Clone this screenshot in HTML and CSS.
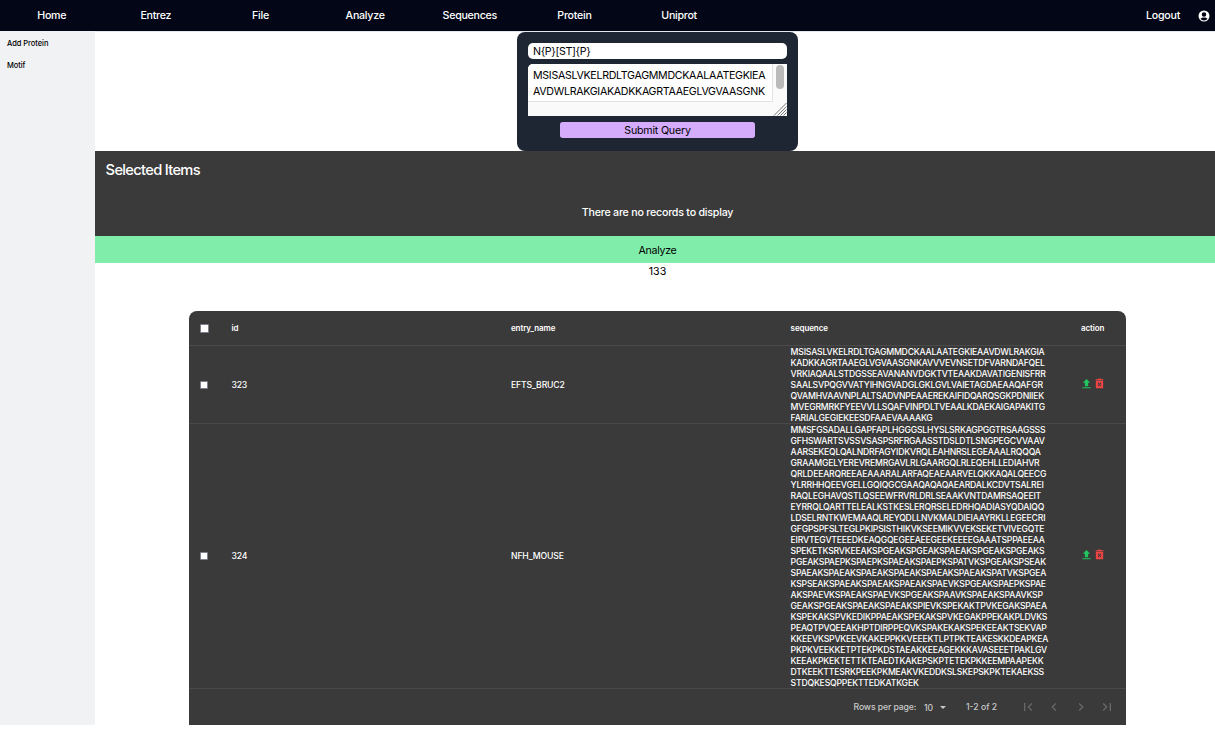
FILE: index.html
```html
<!DOCTYPE html>
<html lang="en">
<head>
<meta charset="utf-8">
<title>Motif</title>
<link rel="stylesheet" href="styles.css">
</head>
<body>
<nav class="nav">
  <a class="nav-link">Home</a><a class="nav-link">Entrez</a><a class="nav-link">File</a><a class="nav-link">Analyze</a><a class="nav-link">Sequences</a><a class="nav-link">Protein</a><a class="nav-link">Uniprot</a>
  <a class="logout">Logout</a>
  <svg class="user" viewBox="0 0 24 24"><path fill="#fff" fill-rule="evenodd" d="M12 1a11 11 0 1 0 0 22a11 11 0 0 0 0-22zM12 4.500a4.500 4.500 0 1 1 0 9a4.500 4.500 0 0 1 0-9zM5 17.500c1.500-2 4.500-2.500 7-2.500s5.500.5 7 2.500c-1.500 2-4 3.300-7 3.300s-5.500-1.300-7-3.300z"/></svg>
</nav>
<div class="layout">
  <aside class="sidebar"><a>Add Protein</a><a>Motif</a></aside>
  <main class="main">
    <form class="query">
      <div class="pattern">N{P}[ST]{P}</div>
      <div class="area">
        <div class="area-text">MSISASLVKELRDLTGAGMMDCKAALAATEGKIEA<br>AVDWLRAKGIAKADKKAGRTAAEGLVGVAASGNK</div>
        <div class="scroll"><div class="thumb"></div>
          <svg class="grip" viewBox="0 0 14 14"><path d="M1 13.500L13.500 1M4.500 13.500L13.500 4.500M7.500 13.500L13.500 7.500M10.500 13.500L13.500 10.500" stroke="#777" stroke-width="1" fill="none"/></svg>
        </div>
      </div>
      <div class="submit">Submit Query</div>
    </form>
    <section class="selected">
      <h2>Selected Items</h2>
      <p>There are no records to display</p>
    </section>
    <div class="analyze">Analyze</div>
    <div class="count">133</div>
    <section class="table">
      <div class="row head"><span class="box"></span><div>id</div><div>entry_name</div><div>sequence</div><div>action</div></div>
      <div class="row first"><span class="box small"></span><div>323</div><div>EFTS_BRUC2</div>
<div class="seq">MSISASLVKELRDLTGAGMMDCKAALAATEGKIEAAVDWLRAKGIA
KADKKAGRTAAEGLVGVAASGNKAVVVEVNSETDFVARNDAFQEL
VRKIAQAALSTDGSSEAVANANVDGKTVTEAAKDAVATIGENISFRR
SAALSVPQGVVATYIHNGVADGLGKLGVLVAIETAGDAEAAQAFGR
QVAMHVAAVNPLALTSADVNPEAAEREKAIFIDQARQSGKPDNIIEK
MVEGRMRKFYEEVVLLSQAFVINPDLTVEAALKDAEKAIGAPAKITG
FARIALGEGIEKEESDFAAEVAAAAKG</div>
        <div class="actions"><svg viewBox="0 0 24 24"><path fill="#22c55e" d="M3 22.500h18v-2.500H3zM8.500 18h7v-7.500h4.500L12 2 4 10.500H8.500z"/></svg><svg viewBox="0 0 24 24"><path fill="#ef4444" fill-rule="evenodd" d="M3.500 2.500H8.500L10 1h4l1.500 1.500H20.500V5H3.500zM4 6h16v14.500a2 2 0 0 1-2 2H6a2 2 0 0 1-2-2zM8 11l2.500 3L8 17l1.500 1.500 2.500-3 2.500 3L16 17l-2.500-3L16 11l-1.500-1.500-2.500 3-2.500-3z"/></svg></div></div>
      <div class="row second"><span class="box small"></span><div>324</div><div>NFH_MOUSE</div>
<div class="seq">MMSFGSADALLGAPFAPLHGGGSLHYSLSRKAGPGGTRSAAGSSS
GFHSWARTSVSSVSASPSRFRGAASSTDSLDTLSNGPEGCVVAAV
AARSEKEQLQALNDRFAGYIDKVRQLEAHNRSLEGEAAALRQQQA
GRAAMGELYEREVREMRGAVLRLGAARGQLRLEQEHLLEDIAHVR
QRLDEEARQREEAEAAARALARFAQEAEAARVELQKKAQALQEECG
YLRRHHQEEVGELLGQIQGCGAAQAQAQAEARDALKCDVTSALREI
RAQLEGHAVQSTLQSEEWFRVRLDRLSEAAKVNTDAMRSAQEEIT
EYRRQLQARTTELEALKSTKESLERQRSELEDRHQADIASYQDAIQQ
LDSELRNTKWEMAAQLREYQDLLNVKMALDIEIAAYRKLLEGEECRI
GFGPSPFSLTEGLPKIPSISTHIKVKSEEMIKVVEKSEKETVIVEGQTE
EIRVTEGVTEEEDKEAQGQEGEEAEEGEEKEEEEGAAATSPPAEEAA
SPEKETKSRVKEEAKSPGEAKSPGEAKSPAEAKSPGEAKSPGEAKS
PGEAKSPAEPKSPAEPKSPAEAKSPAEPKSPATVKSPGEAKSPSEAK
SPAEAKSPAEAKSPAEAKSPAEAKSPAEAKSPAEAKSPATVKSPGEA
KSPSEAKSPAEAKSPAEAKSPAEAKSPAEVKSPGEAKSPAEPKSPAE
AKSPAEVKSPAEAKSPAEVKSPGEAKSPAAVKSPAEAKSPAAVKSP
GEAKSPGEAKSPAEAKSPAEAKSPIEVKSPEKAKTPVKEGAKSPAEA
KSPEKAKSPVKEDIKPPAEAKSPEKAKSPVKEGAKPPEKAKPLDVKS
PEAQTPVQEEAKHPTDIRPPEQVKSPAKEKAKSPEKEEAKTSEKVAP
KKEEVKSPVKEEVKAKEPPKKVEEEKTLPTPKTEAKESKKDEAPKEA
PKPKVEEKKETPTEKPKDSTAEAKKEEAGEKKKAVASEEETPAKLGV
KEEAKPKEKTETTKTEAEDTKAKEPSKPTETEKPKKEEMPAAPEKK
DTKEEKTTESRKPEEKPKMEAKVKEDDKSLSKEPSKPKTEKAEKSS
STDQKESQPPEKTTEDKATKGEK</div>
        <div class="actions"><svg viewBox="0 0 24 24"><path fill="#22c55e" d="M3 22.500h18v-2.500H3zM8.500 18h7v-7.500h4.500L12 2 4 10.500H8.500z"/></svg><svg viewBox="0 0 24 24"><path fill="#ef4444" fill-rule="evenodd" d="M3.500 2.500H8.500L10 1h4l1.500 1.500H20.500V5H3.500zM4 6h16v14.500a2 2 0 0 1-2 2H6a2 2 0 0 1-2-2zM8 11l2.500 3L8 17l1.500 1.500 2.500-3 2.500 3L16 17l-2.500-3L16 11l-1.500-1.500-2.500 3-2.500-3z"/></svg></div></div>
      <footer class="pager">
        <span class="rpp">Rows per page:</span><span class="num">10</span><span class="caret"></span><span class="range">1-2 of 2</span>
        <svg viewBox="0 0 24 24"><path d="M18.410 16.590L13.820 12l4.590-4.590L17 6l-6 6 6 6zM6 6h2v12H6z"/></svg>
        <svg viewBox="0 0 24 24"><path d="M15.410 7.410L14 6l-6 6 6 6 1.410-1.410L10.830 12z"/></svg>
        <svg viewBox="0 0 24 24"><path d="M10 6L8.590 7.410 13.170 12l-4.580 4.590L10 18l6-6z"/></svg>
        <svg viewBox="0 0 24 24"><path d="M5.590 7.410L10.180 12l-4.590 4.590L7 18l6-6-6-6zM16 6h2v12h-2z"/></svg>
      </footer>
    </section>
  </main>
</div>
</body>
</html>
```
FILE: styles.css
```css
* { box-sizing: border-box; }
body { margin: 0; background: #fff; color: #000; font: 10.67px/16px Inter, sans-serif; letter-spacing: -0.2px; overflow: hidden; }
h2, p { margin: 0; }
.nav { height: 31px; background: #020617; color: #fff; display: flex; align-items: center; padding-right: 5px; font-weight: 500; letter-spacing: -0.270px; }
.nav-link { width: 104.670px; text-align: center; }
.nav-link:first-child { width: 103.500px; }
.logout { margin-left: auto; }
.user { width: 12px; height: 12px; margin-left: 18px; }
.layout { display: flex; height: 694px; }
.sidebar { width: 95px; background: #f1f2f4; padding: 7px 7px 0; display: flex; flex-direction: column; gap: 11px; font-size: 7.500px; line-height: 11px; font-weight: 450; letter-spacing: -0.050px; }
.main { flex: 1; display: flex; flex-direction: column; border-top: 1px solid #e5e7eb; }
.query { width: 281px; height: 119px; margin-left: 422px; background: #1e2533; border-radius: 8px; padding: 11px; display: flex; flex-direction: column; }
.pattern { height: 16px; line-height: 18px; width: 259px; background: #fff; border-radius: 5px; padding-left: 5px; letter-spacing: -0.350px; }
.area { margin-top: 5px; width: 259px; height: 52px; background: #fafafa; border-radius: 5px 0 0 0; display: flex; align-items: flex-start; overflow: hidden; }
.area-text { width: 245px; height: 38px; background: #fff; border: solid #e2e2e2; border-width: 0 1px 1px 0; padding: 4px 0 0 5px; white-space: nowrap; letter-spacing: -0.310px; }
.scroll { width: 14px; height: 52px; display: flex; flex-direction: column; align-items: center; justify-content: space-between; padding-top: 1px; }
.thumb { width: 8px; height: 24px; border-radius: 4px; background: #bababa; }
.grip { width: 14px; height: 14px; }
.submit { margin: 6px 0 0 32px; width: 195px; height: 16px; line-height: 18px; background: #d4acfb; border-radius: 2.670px; text-align: center; }
.selected { height: 85px; background: #3a3a3a; color: #fff; padding: 8px 0 0 5px; display: flex; flex-direction: column; font-weight: 500; text-align: center; letter-spacing: -0.220px; }
.selected h2 { padding-left: 5.600px; text-align: left; font-size: 14.670px; line-height: 22px; font-weight: 500; letter-spacing: -0.680px; }
.selected p { margin-top: 24px; }
.analyze { height: 27px; line-height: 30px; background: #80eeaa; padding-left: 5px; text-align: center; letter-spacing: -0.300px; }
.count { padding: 1px 0 0 5px; text-align: center; height: 48px; letter-spacing: 0; }
.table { margin-left: 94px; width: 937px; height: 414px; background: #3a3a3a; color: #fff; border-radius: 8px 8px 0 0; letter-spacing: -0.150px; }
.row { display: grid; grid-template-columns: 42.400px 279.600px 279.600px 290.400px 40px; align-items: center; border-bottom: 1px solid #4a4a4a; font-size: 8.670px; line-height: 11px; font-weight: 500; }
.head { height: 35px; padding-top: 1px; font-size: 8px; font-weight: 600; letter-spacing: -0.090px; }
.first { height: 78px; padding-top: 1px; }
.second { height: 265px; }
.second .seq { margin: 1px 0 -1px; }
.box { width: 9px; height: 9px; margin-left: 11px; background: #fff; border: 1px solid #80808c; border-radius: 1px; }
.small { width: 8px; height: 8px; }
.first .small, .second .small { margin-top: -1px; }
.seq { white-space: pre; font-weight: 500; letter-spacing: -0.210px; }
.actions { display: flex; gap: 2px; }
.actions svg { width: 11px; height: 11px; margin-top: -3px; }
.first .actions svg { margin-top: -5px; }
.pager { height: 36px; display: flex; align-items: center; color: #c8c8c8; font-size: 8.670px; padding: 0 10px 0 664.500px; font-weight: 500; letter-spacing: 0; }
.rpp { width: 70.500px; flex: none; white-space: nowrap; letter-spacing: -0.100px; }
.num { width: 16px; flex: none; padding-top: 2px; }
.caret { flex: none; border: 3.500px solid transparent; border-top-color: #c8c8c8; border-bottom: 0; }
.range { margin: 0 17.500px 0 20px; width: 36px; flex: none; white-space: nowrap; }
.pager svg { width: 16px; height: 16px; margin-right: 10.670px; fill: #686868; flex: none; }
```
